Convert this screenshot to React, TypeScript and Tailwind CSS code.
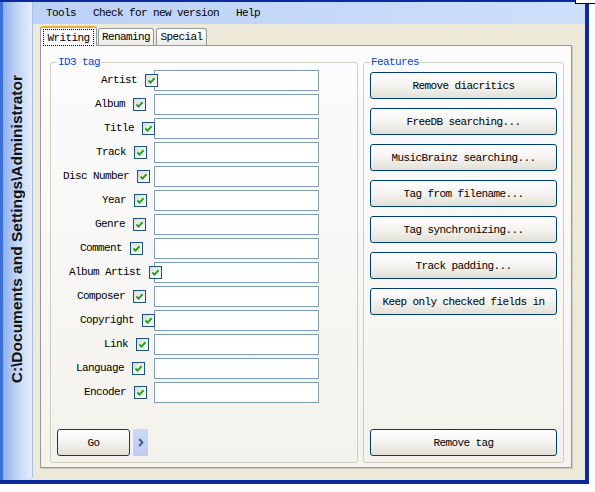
import React from "react";

type Field = { label: string; cb: string };

// checkbox offsets differ per row in the original dialog
const FIELDS: Field[] = [
  { label: "Artist", cb: "-mr-[4px]" },
  { label: "Album", cb: "mr-[8px]" },
  { label: "Title", cb: "-mr-[1px]" },
  { label: "Track", cb: "mr-[7px]" },
  { label: "Disc Number", cb: "mr-[4px]" },
  { label: "Year", cb: "mr-[7px]" },
  { label: "Genre", cb: "mr-[8px]" },
  { label: "Comment", cb: "mr-[11px]" },
  { label: "Album Artist", cb: "-mr-[8px]" },
  { label: "Composer", cb: "mr-[8px]" },
  { label: "Copyright", cb: "-mr-[1px]" },
  { label: "Link", cb: "mr-[5px]" },
  { label: "Language", cb: "mr-[9px]" },
  { label: "Encoder", cb: "mr-[7px]" },
];

const FEATURES = [
  "Remove diacritics",
  "FreeDB searching...",
  "MusicBrainz searching...",
  "Tag from filename...",
  "Tag synchronizing...",
  "Track padding...",
  "Keep only checked fields in",
];

function Check({ className }: { className: string }) {
  return (
    <span
      className={`relative z-10 flex h-[13px] w-[13px] shrink-0 items-center justify-center border border-[#1c5180] bg-gradient-to-br from-[#dcdcd6] to-white ${className}`}
    >
      <svg width="9" height="9" viewBox="0 0 9 9">
        <path d="M1.5 4.5 L3.6 6.6 L7.6 2.2" fill="none" stroke="#21a121" strokeWidth="2" />
      </svg>
    </span>
  );
}

function XpButton({ children, className = "" }: { children: React.ReactNode; className?: string }) {
  return (
    <button
      className={`flex h-[27px] items-center justify-center overflow-hidden whitespace-nowrap rounded-[3px] border border-[#003c74] bg-gradient-to-b from-white via-[#f4f3ef] to-[#e2e0d6] text-black ${className}`}
    >
      {children}
    </button>
  );
}

export default function App() {
  return (
    <div className="relative h-[492px] w-[595px] overflow-hidden bg-white font-['Liberation_Mono',monospace] text-[11px] leading-[12px] tracking-[-0.6px] text-black">
      <div className="flex h-[484px] w-[589px] border-t-2 border-r-4 border-b-4 border-[#0b2a9e]">
        {/* side strip with path */}
        <div className="flex w-[33px] shrink-0 flex-col items-start justify-end rounded-br-[4px] border-l-[3px] border-r border-l-[#3a6fdc] border-r-[#a9bfe6] bg-gradient-to-r from-[#8cafee] via-[#c4d6f6] to-[#e4edfb] pb-[97px] pl-[5px]">
          <span className="rotate-180 whitespace-nowrap font-['Liberation_Sans',Arial,sans-serif] text-[15.5px] font-bold leading-[18px] tracking-normal text-[#111] [writing-mode:vertical-rl]">
            C:\Documents and Settings\Administrator
          </span>
        </div>

        <div className="flex min-w-0 flex-1 flex-col">
          {/* menu bar */}
          <div className="flex h-[22px] items-center gap-[17px] bg-gradient-to-r from-[#bcd1f6] to-[#cddffa] pl-[13px]">
            <span>Tools</span>
            <span>Check for new version</span>
            <span>Help</span>
          </div>

          <div className="flex flex-1 flex-col bg-[#ece9d8] pb-[12px] pl-[7px] pr-[13px] pt-[2px]">
            {/* tabs */}
            <div className="flex h-[19px] items-end">
              <div className="relative z-10 -mb-px flex h-[20px] w-[57px] flex-col rounded-t-[3px] border-x border-t-2 border-x-[#919b9c] border-t-[#f5a93a] bg-[#fcfcfe] px-[2px] pt-px">
                <span className="flex flex-1 items-center justify-center border border-dotted border-black">
                  Writing
                </span>
              </div>
              <div className="ml-px flex h-[17px] w-[56px] items-center justify-center rounded-t-[3px] border border-b-0 border-[#919b9c] bg-gradient-to-b from-white to-[#ecebe5]">
                Renaming
              </div>
              <div className="ml-[2px] flex h-[17px] w-[51px] items-center justify-center rounded-t-[3px] border border-b-0 border-[#919b9c] bg-gradient-to-b from-white to-[#ecebe5]">
                Special
              </div>
            </div>

            {/* tab page */}
            <div className="flex flex-1 gap-[5px] border border-[#919b9c] bg-gradient-to-b from-[#fcfcfe] to-[#f3f2ec] pb-[4px] pl-[9px] pr-[7px] pt-[16px] shadow-[1px_1px_0_#cfccbd]">
              {/* ID3 tag group */}
              <div className="relative flex w-[308px] flex-col rounded-[3px] border border-[#d0d0bf] pb-[6px] pt-[5px]">
                <span className="absolute -top-[7px] left-[6px] bg-[#fcfcfd] px-px text-[#0046d5]">ID3 tag</span>
                {FIELDS.map((f) => (
                  <div key={f.label} className="flex h-[24px] items-center">
                    <div className="flex w-[103px] items-center justify-end gap-[8px]">
                      <span className="whitespace-nowrap">{f.label}</span>
                      <Check className={f.cb} />
                    </div>
                    <div className="h-[21px] w-[165px] border border-[#7f9db9] bg-white" />
                  </div>
                ))}
                <div className="mt-auto flex items-center pl-[6px]">
                  <XpButton className="w-[73px]">Go</XpButton>
                  <div className="ml-[3px] flex h-[27px] w-[15px] items-center justify-center bg-gradient-to-b from-[#cdd9f8] to-[#bccbf3]">
                    <svg width="6" height="9" viewBox="0 0 6 9">
                      <path d="M1.2 1 L4.4 4.5 L1.2 8" fill="none" stroke="#4a5e88" strokeWidth="2" />
                    </svg>
                  </div>
                </div>
              </div>

              {/* Features group */}
              <div className="relative flex w-[201px] flex-col gap-[9px] rounded-[3px] border border-[#d0d0bf] px-[6px] pb-[6px] pt-[9px]">
                <span className="absolute -top-[7px] left-[6px] bg-[#fcfcfd] px-px text-[#0046d5]">Features</span>
                {FEATURES.map((label) => (
                  <XpButton key={label} className="w-full">
                    {label}
                  </XpButton>
                ))}
                <XpButton className="mt-auto w-full">Remove tag</XpButton>
              </div>
            </div>
          </div>
        </div>
      </div>
      {/* corner of the window behind */}
      <div className="absolute left-[575px] top-0 h-[4px] w-[20px] border-b border-l border-black bg-white" />
    </div>
  );
}
